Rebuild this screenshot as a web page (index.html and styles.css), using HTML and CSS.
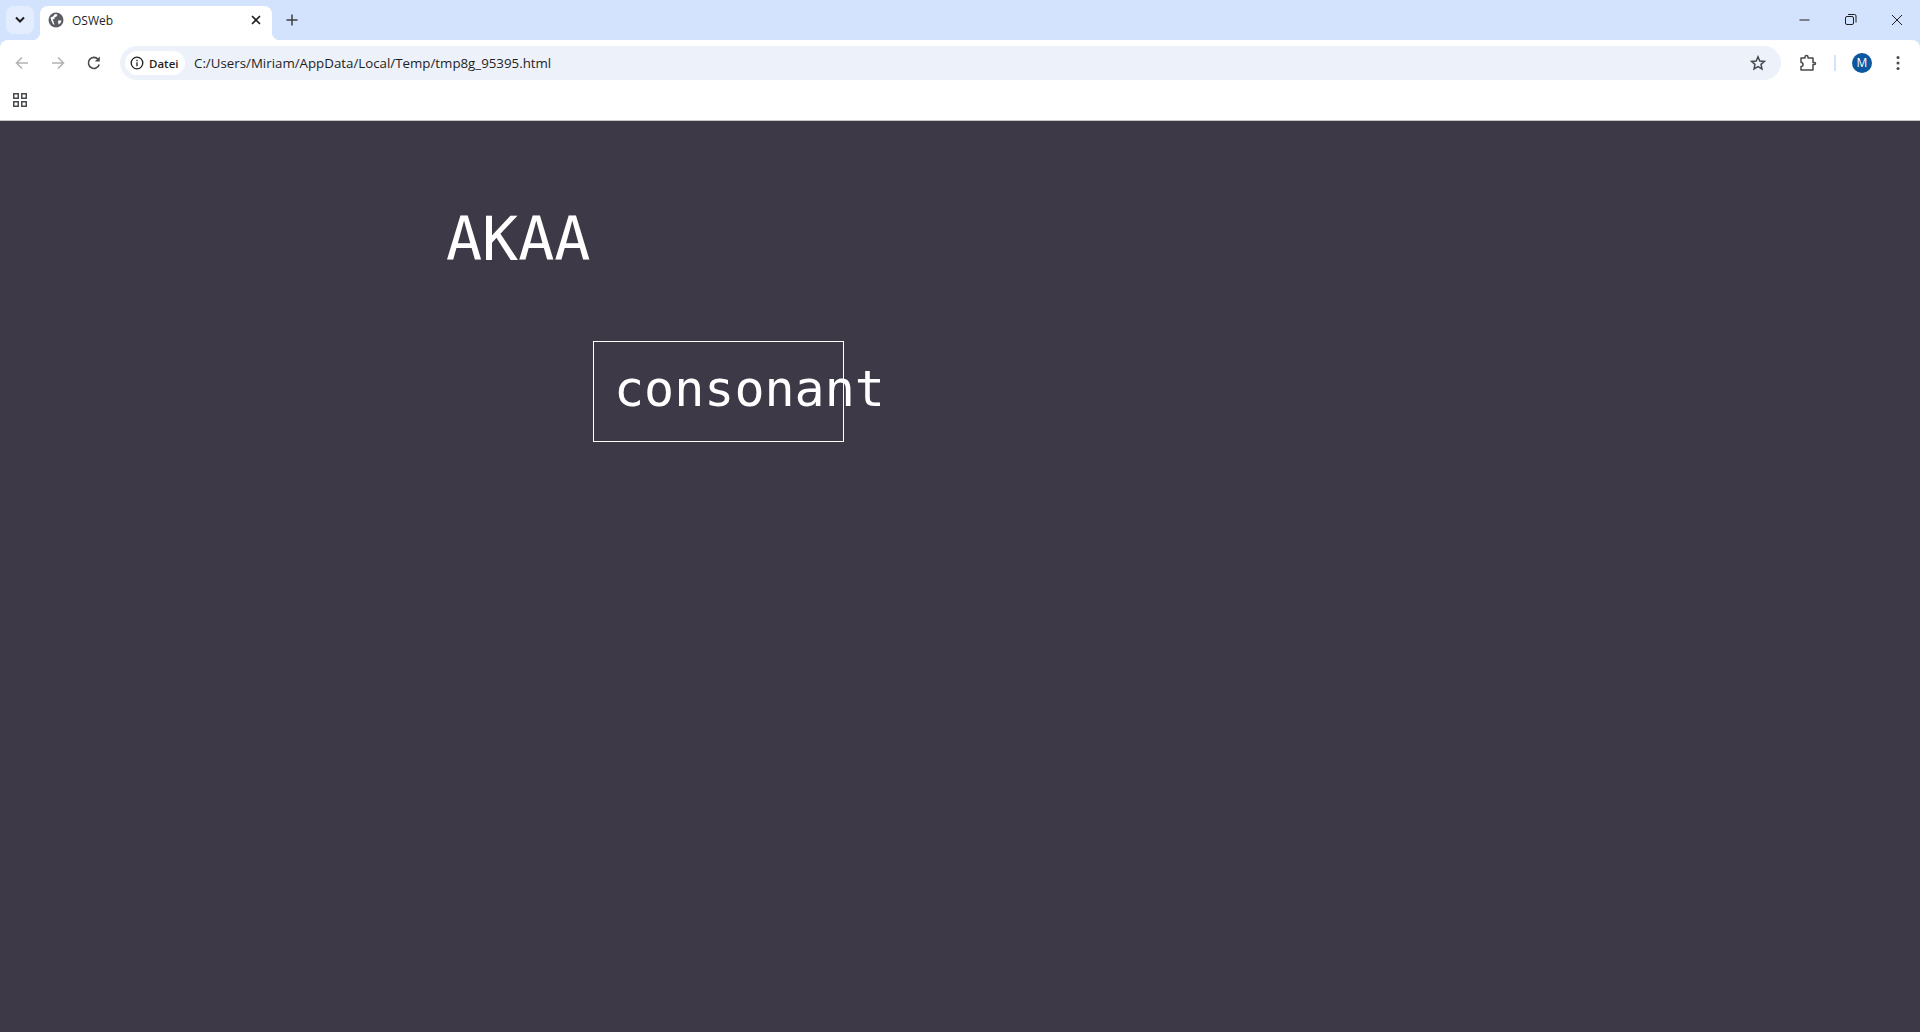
FILE: index.html
```html
<!DOCTYPE html>
<html lang="en">
<head>
    <meta charset="UTF-8">
    <meta name="viewport" content="width=device-width, initial-scale=1.0">
    <title>OSWeb</title>
    <link rel="stylesheet" href="styles.css">
</head>
<body>
    <div class="tabstrip">
        <div class="tab-search">
            <svg width="12" height="8" viewBox="0 0 12 8"><path d="M2 1.5 6 5.5 10 1.5" fill="none" stroke="#1f1f1f" stroke-width="2"/></svg>
        </div>
        <div class="tab">
            <svg class="favicon" width="16" height="16" viewBox="0 0 16 16"><circle cx="8" cy="8" r="7.5" fill="#5a5d62"/><path d="M2.500 5.500 5 4.500 7 2 9.500 2.500 8.500 4.500 6.500 5.500 6.500 7 4.500 7.500 5.500 9.500 6.500 13 5 12 3.500 9ZM10 8.500 13.500 8.500 12.500 11 10.500 12.500Z" fill="#fff"/></svg>
            <span class="tab-title">OSWeb</span>
            <svg class="tab-close" width="10" height="10" viewBox="0 0 10 10"><path d="M1 1 9 9M9 1 1 9" stroke="#1f1f1f" stroke-width="1.6"/></svg>
        </div>
        <svg class="new-tab" width="12" height="12" viewBox="0 0 12 12"><path d="M6 .5V11.500M.5 6H11.500" stroke="#3c3f43" stroke-width="1.5"/></svg>
        <div class="window-controls">
            <svg width="12" height="12" viewBox="0 0 12 12"><path d="M.5 6H10.500" stroke="#1f1f1f"/></svg>
            <svg width="12" height="12" viewBox="0 0 12 12"><rect x=".5" y="2.500" width="8" height="8" rx="1.500" fill="none" stroke="#1f1f1f"/><path d="M3 .5H9.500A1.500 1.500 0 0 1 11 2V8.500" fill="none" stroke="#1f1f1f"/></svg>
            <svg width="12" height="12" viewBox="0 0 12 12"><path d="M1 1 11 11M11 1 1 11" stroke="#1f1f1f"/></svg>
        </div>
    </div>

    <div class="toolbar">
        <svg class="nav-icon" width="16" height="16" viewBox="0 0 16 16"><path d="M14 8H3M8 2.500 2.500 8 8 13.500" fill="none" stroke="#b1b3b6" stroke-width="1.600"/></svg>
        <svg class="nav-icon" width="16" height="16" viewBox="0 0 16 16"><path d="M2 8H13M8 2.500 13.500 8 8 13.500" fill="none" stroke="#b1b3b6" stroke-width="1.600"/></svg>
        <svg class="nav-icon" width="16" height="16" viewBox="0 0 16 16"><path d="M13.200 9.500A5.500 5.500 0 1 1 12 4.200" fill="none" stroke="#474a4d" stroke-width="1.600"/><path d="M13.800 1.500V6.500H8.800Z" fill="#474a4d"/></svg>
        <div class="omnibox">
            <div class="chip">
                <svg width="14" height="14" viewBox="0 0 14 14"><circle cx="7" cy="7" r="5.800" fill="none" stroke="#1f1f1f" stroke-width="1.300"/><path d="M7 6.200V10.200M7 3.800V5.200" stroke="#1f1f1f" stroke-width="1.300"/></svg>
                <span>Datei</span>
            </div>
            <span class="url">C:/Users/Miriam/AppData/Local/Temp/tmp8g_95395.html</span>
            <svg class="star" width="16" height="16" viewBox="0 0 16 16"><path d="M8 1.800 9.800 6 14.500 6.400 11 9.400 12 14 8 11.600 4 14 5 9.400 1.500 6.400 6.200 6Z" fill="none" stroke="#474a4d" stroke-width="1.500"/></svg>
        </div>
        <svg class="puzzle" width="18" height="18" viewBox="0 0 18 18"><path d="M2 4H6V3A1.500 1.500 0 0 1 9 3V4H14V8.500H15.500A1 1 0 0 1 15.500 10.500H14V16H2V12.500A2 2 0 0 0 2 8.500Z" fill="none" stroke="#474a4d" stroke-width="1.500" stroke-linejoin="round"/></svg>
        <div class="divider"></div>
        <div class="avatar">M</div>
        <svg class="menu" width="4" height="16" viewBox="0 0 4 16"><circle cx="2" cy="2.500" r="1.500" fill="#474a4d"/><circle cx="2" cy="8" r="1.500" fill="#474a4d"/><circle cx="2" cy="13.500" r="1.500" fill="#474a4d"/></svg>
    </div>

    <div class="bookmarks">
        <svg width="14" height="14" viewBox="0 0 14 14"><g fill="none" stroke="#474a4d" stroke-width="1.500"><rect x=".75" y=".75" width="4.500" height="4.500"/><rect x="8.750" y=".75" width="4.500" height="4.500"/><rect x=".75" y="8.750" width="4.500" height="4.500"/><rect x="8.750" y="8.750" width="4.500" height="4.500"/></g></svg>
    </div>

    <div class="stage">
        <div class="target">AKAA</div>
        <div class="response-box"></div>
        <div class="response">consonant</div>
    </div>
</body>
</html>
```

FILE: styles.css
```css
html, body {
    height: 100%;
    margin: 0;
    padding: 0;
    overflow: hidden;
}
body {
    display: flex;
    flex-direction: column;
    font-family: "Open Sans", "Liberation Sans", sans-serif;
    background-color: #d3e3fd; /* shows behind the toolbar's round corners */
}
svg {
    display: block;
    flex: none;
}

/* tab strip */
.tabstrip {
    height: 40px;
    flex: none;
    display: flex;
    align-items: flex-start;
}
.tab-search {
    width: 28px;
    height: 28px;
    margin: 6px 0 0 6px;
    border-radius: 8px;
    display: flex;
    align-items: center;
    justify-content: center;
    background-color: #e3edfd;
}
.tab {
    position: relative;
    z-index: 1;
    width: 232px;
    height: 34px;
    margin: 6px 0 0 6px;
    box-sizing: border-box;
    padding: 0 11px 6px 8px;
    border-radius: 8px 8px 0 0;
    display: flex;
    align-items: center;
    background-color: #fff;
}
.tab::before, .tab::after {
    content: "";
    position: absolute;
    bottom: 0;
    width: 8px;
    height: 8px;
}
.tab::before {
    left: -8px;
    background: radial-gradient(circle at 0 0, #d3e3fd 8px, #fff 8.5px);
}
.tab::after {
    right: -8px;
    background: radial-gradient(circle at 100% 0, #d3e3fd 8px, #fff 8.5px);
}
.tab-title {
    margin-left: 8px;
    font-size: 12px;
    color: #1f1f1f;
}
.tab-close {
    margin-left: auto;
}
.new-tab {
    margin: 14px 0 0 14px;
}
.window-controls {
    margin-left: auto;
    margin-top: 14px;
    padding-right: 17px;
    display: flex;
    gap: 34px;
}

/* toolbar */
.toolbar {
    height: 40px;
    flex: none;
    box-sizing: border-box;
    padding: 6px 0 0 14px;
    border-radius: 8px 8px 0 0;
    display: flex;
    align-items: flex-start;
    background-color: #fff;
}
.nav-icon {
    margin: 9px 20px 0 0;
}
.omnibox {
    width: 1661px;
    height: 34px;
    margin-left: -2px;
    box-sizing: border-box;
    padding: 0 12px 0 5px;
    border-radius: 17px;
    display: flex;
    align-items: center;
    background-color: #ecf1fa;
}
.chip {
    width: 60px;
    height: 24px;
    box-sizing: border-box;
    padding-left: 5px;
    border-radius: 12px;
    display: flex;
    align-items: center;
    gap: 5px;
    font-size: 11.500px;
    font-weight: 600;
    color: #1f1f1f;
    background-color: #fff;
}
.url {
    margin-left: 9px;
    font-size: 13.300px;
    color: #1f1f1f;
}
.star {
    margin-left: auto;
    margin-right: 3px;
}
.puzzle {
    margin: 8px 0 0 18px;
}
.divider {
    width: 2px;
    height: 16px;
    margin: 9px 0 0 17px;
    background-color: #d3e3fd;
}
.avatar {
    width: 20px;
    height: 20px;
    margin: 7px 0 0 16px;
    border-radius: 50%;
    font-size: 12px;
    line-height: 20px;
    text-align: center;
    color: #fff;
    background-color: #0b57a0;
}
.menu {
    margin: 9px 0 0 24px;
}

/* bookmarks bar */
.bookmarks {
    height: 41px;
    flex: none;
    box-sizing: border-box;
    padding: 13px 0 0 13px;
    border-bottom: 1px solid #c7c7c7;
    background-color: #fff;
}

/* experiment canvas, items sit where the experiment drew them */
.stage {
    position: relative;
    flex: 1;
    color: #fff;
    font-family: "DejaVu Sans Mono", monospace;
    background-color: #3d3947;
}
.target {
    position: absolute;
    left: 446px;
    top: 86px;
    font-size: 60px;
    line-height: 64px;
}
.response-box {
    position: absolute;
    left: 593px;
    top: 220px;
    width: 249px;
    height: 99px;
    border: 1px solid #fff;
}
.response {
    position: absolute;
    left: 614px;
    top: 239px;
    font-size: 50px;
    line-height: 58px;
}
```
